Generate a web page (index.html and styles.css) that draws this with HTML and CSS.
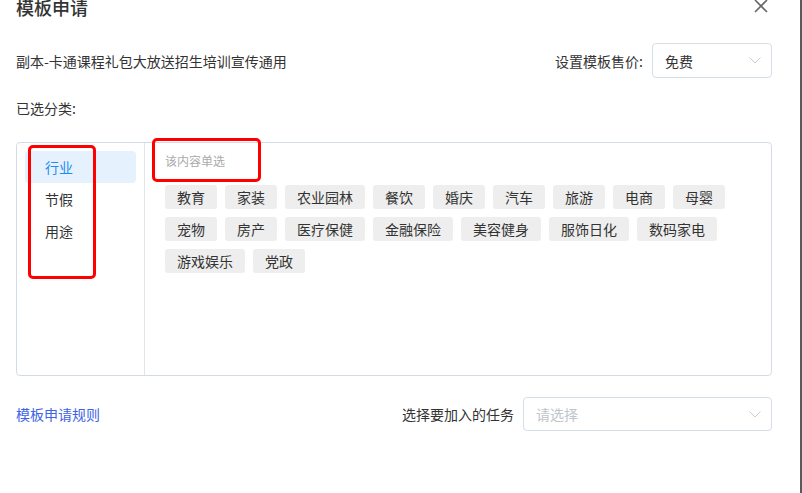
FILE: index.html
```html
<!DOCTYPE html>
<html lang="zh-CN">
<head>
  <meta charset="UTF-8">
  <title>模板申请</title>
  <link rel="stylesheet" href="styles.css">
</head>
<body>
  <div class="page">
    <div class="dialog">
      <div class="dialog-header">
        <h3 class="dialog-title">模板申请</h3>
        <span class="close-btn">
          <svg width="14" height="14" viewBox="0 0 14 14">
            <path d="M1 1 L13 13 M13 1 L1 13" stroke="#666" stroke-width="1.6" fill="none"/>
          </svg>
        </span>
      </div>

      <div class="form-row">
        <span class="template-name">副本-卡通课程礼包大放送招生培训宣传通用</span>
        <div class="field">
          <label>设置模板售价:</label>
          <div class="select price-select">
            <span>免费</span>
            <svg class="arrow" width="12" height="7" viewBox="0 0 12 7">
              <polyline points="0.5,0.5 6,6 11.5,0.5" stroke="#c6ccd4" fill="none"/>
            </svg>
          </div>
        </div>
      </div>

      <div class="selected-label">已选分类:</div>

      <div class="category-box">
        <ul class="category-list">
          <li class="active">行业</li>
          <li>节假</li>
          <li>用途</li>
        </ul>
        <div class="category-pane">
          <p class="hint">该内容单选</p>
          <div class="tags">
            <span class="tag">教育</span>
            <span class="tag">家装</span>
            <span class="tag">农业园林</span>
            <span class="tag">餐饮</span>
            <span class="tag">婚庆</span>
            <span class="tag">汽车</span>
            <span class="tag">旅游</span>
            <span class="tag">电商</span>
            <span class="tag">母婴</span>
            <span class="tag">宠物</span>
            <span class="tag">房产</span>
            <span class="tag">医疗保健</span>
            <span class="tag">金融保险</span>
            <span class="tag">美容健身</span>
            <span class="tag">服饰日化</span>
            <span class="tag">数码家电</span>
            <span class="tag">游戏娱乐</span>
            <span class="tag">党政</span>
          </div>
        </div>
        <!-- red annotation marks -->
        <span class="mark mark-list"></span>
        <span class="mark mark-hint"></span>
      </div>

      <div class="form-row footer-row">
        <a class="rule-link" href="#">模板申请规则</a>
        <div class="field">
          <label>选择要加入的任务</label>
          <div class="select task-select">
            <span class="placeholder">请选择</span>
            <svg class="arrow" width="12" height="7" viewBox="0 0 12 7">
              <polyline points="0.5,0.5 6,6 11.5,0.5" stroke="#c6ccd4" fill="none"/>
            </svg>
          </div>
        </div>
      </div>
    </div>
    <div class="scrollbar"></div>
  </div>
</body>
</html>
```

FILE: styles.css
```css
body {
  font-family: "Noto Sans CJK SC", "Noto Sans", sans-serif;
  font-size: 14px;
  color: #333;
  background: #fff;
  margin: 0;
  padding: 0;
  overflow: hidden;
}

.page {
  display: flex;
  height: 493px;
  overflow: hidden;
}

.dialog {
  flex: 1;
  padding: 0 28px 0 16px;
}

.scrollbar {
  width: 2px;
  background: #5a5a5a;
}

.dialog-header {
  display: flex;
  justify-content: space-between;
  align-items: center;
  height: 24px;
  margin-top: -5px;
}

.dialog-title {
  margin: 0;
  font-size: 18px;
  line-height: 24px;
  font-weight: 500;
  color: #333;
}

.close-btn {
  display: flex;
  margin-right: 4px;
  margin-top: -2px;
}

.form-row {
  display: flex;
  justify-content: space-between;
  align-items: center;
  height: 35px;
  margin-top: 24px;
}

.field {
  display: flex;
  align-items: center;
  gap: 9px;
}

.select {
  box-sizing: border-box;
  display: flex;
  align-items: center;
  justify-content: space-between;
  height: 35px;
  padding: 0 10px 0 12px;
  border: 1px solid #d6dee6;
  border-radius: 4px;
}

.price-select {
  width: 120px;
}

.task-select {
  width: 249px;
  height: 34px;
}

.placeholder {
  color: #c0c4cc;
}

.selected-label {
  line-height: 20px;
  margin-top: 20px;
}

.category-box {
  position: relative;
  box-sizing: border-box;
  display: flex;
  height: 234px;
  margin-top: 24px;
  border: 1px solid #d3dce4;
  border-radius: 4px;
}

.category-list {
  list-style: none;
  margin: 0;
  width: 111px;
  padding: 8px;
  border-right: 1px solid #dfe5ea;
}

.category-list li {
  height: 32px;
  line-height: 32px;
  padding-left: 20px;
  border-radius: 4px;
}

.category-list li.active {
  background: #e5f1fd;
  color: #1d8cf2;
}

.category-pane {
  flex: 1;
  padding: 8px 20px;
}

.hint {
  margin: 0;
  font-size: 12px;
  line-height: 20px;
  color: #aaa;
}

.tags {
  display: flex;
  flex-wrap: wrap;
  gap: 8px;
  margin-top: 14px;
  max-width: 570px;
}

.tag {
  height: 24px;
  line-height: 24px;
  padding: 0 12px;
  background: #eeeeee;
  border-radius: 3px;
}

.mark {
  position: absolute;
  box-sizing: border-box;
  border: 3px solid #f00;
  border-radius: 5px;
}

.mark-list {
  left: 11px;
  top: 2px;
  width: 68px;
  height: 134px;
}

.mark-hint {
  left: 135px;
  top: -5px;
  width: 109px;
  height: 44px;
}

.footer-row {
  height: 34px;
  margin-top: 21px;
}

.rule-link {
  color: #3d63e6;
  text-decoration: none;
}
```
